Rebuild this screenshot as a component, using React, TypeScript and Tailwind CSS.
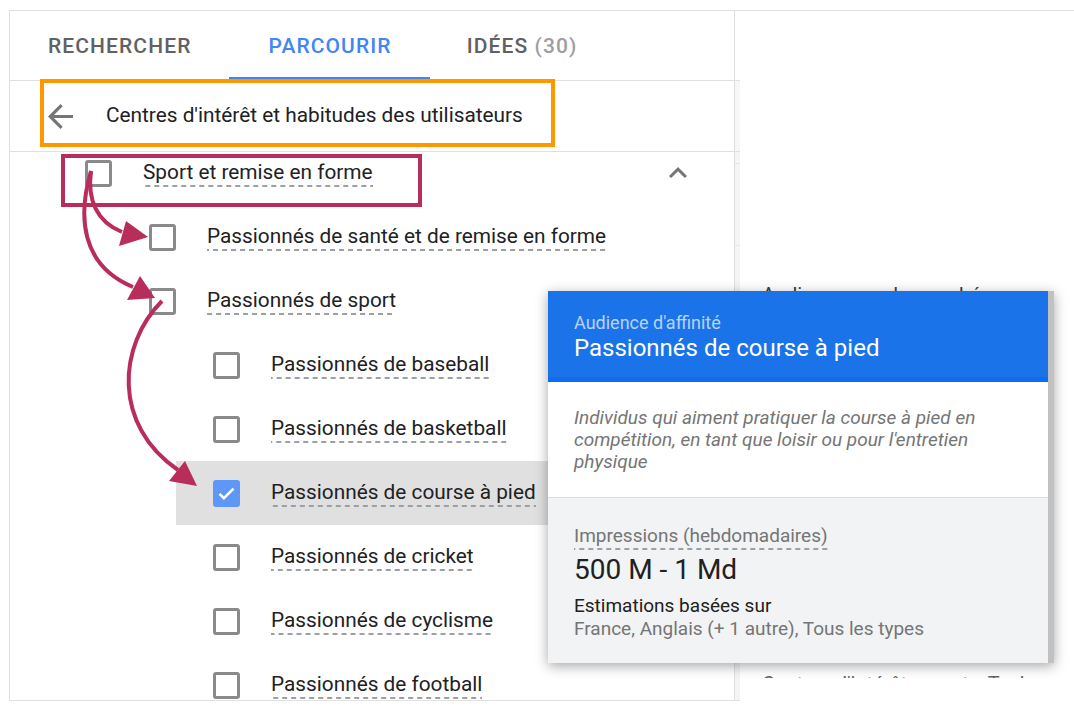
import React from 'react';

type Row = { level: 1 | 2 | 3; label: string; checked?: boolean; chevron?: boolean };

const rows: Row[] = [
  { level: 1, label: 'Sport et remise en forme', chevron: true },
  { level: 2, label: 'Passionnés de santé et de remise en forme' },
  { level: 2, label: 'Passionnés de sport' },
  { level: 3, label: 'Passionnés de baseball' },
  { level: 3, label: 'Passionnés de basketball' },
  { level: 3, label: 'Passionnés de course à pied', checked: true },
  { level: 3, label: 'Passionnés de cricket' },
  { level: 3, label: 'Passionnés de cyclisme' },
  { level: 3, label: 'Passionnés de football' },
];

const levelMargin: Record<number, string> = {
  1: 'ml-[38px]',
  2: 'ml-[102px]',
  3: 'ml-[166px]',
};

const dashed =
  'bg-[linear-gradient(to_right,#9aa0a6_58%,transparent_58%)] bg-[length:9px_2px] bg-repeat-x bg-bottom';

function Checkbox({ checked }: { checked?: boolean }) {
  if (checked) {
    return (
      <div className="w-[27px] h-[27px] rounded-[3px] bg-[#5e97f6] shrink-0 flex items-center justify-center">
        <svg width="27" height="27" viewBox="0 0 27 27">
          <path d="M6.5 13.8l4.4 4.4 9.6-9.6" fill="none" stroke="#ffffff" strokeWidth="2.6" />
        </svg>
      </div>
    );
  }
  return <div className="w-[27px] h-[27px] rounded-[3px] border-[3px] border-[#8a8a8a] shrink-0" />;
}

function LeftPanel() {
  return (
    <div className="w-[726px] h-full shrink-0 border border-[#e0e0e0] flex flex-col bg-white">
      {/* Tabs */}
      <div className="h-[70px] border-b border-[#e0e0e0] flex shrink-0">
        <div className="relative h-full flex items-center pt-[2px] px-[38px] text-[21px] font-medium tracking-[1.1px] text-[#616161]">
          RECHERCHER
        </div>
        <div className="relative h-full flex items-center pt-[2px] pl-[39px] pr-[38px] text-[21px] font-medium tracking-[1.1px] text-[#4285f4]">
          PARCOURIR
          <div className="absolute left-0 right-0 bottom-0 h-[3px] bg-[#4285f4]" />
        </div>
        <div className="relative h-full flex items-center pt-[2px] pl-[37px] pr-[38px] text-[21px] font-medium tracking-[1.1px] text-[#616161]">
          IDÉES&nbsp;<span className="text-[#9e9e9e]">(30)</span>
        </div>
      </div>
      {/* Header */}
      <div className="h-[71px] border-b border-[#e0e0e0] flex items-center shrink-0">
        <svg className="ml-[38px] shrink-0" width="25" height="25" viewBox="4 4 16 16">
          <path d="M20 11H7.83l5.59-5.59L12 4l-8 8 8 8 1.41-1.41L7.83 13H20v-2z" fill="#757575" />
        </svg>
        <div className="ml-[33px] text-[20.8px] text-[#202124]">Centres d'intérêt et habitudes des utilisateurs</div>
      </div>
      {/* List */}
      <div className="flex-1 overflow-hidden">
        <div className="-mt-[11px]">
          {rows.map((r) => (
            <div
              key={r.label}
              className={`flex items-center h-16 pl-[37px] ${levelMargin[r.level]} ${r.checked ? 'bg-[#e0e0e0]' : ''}`}
            >
              <Checkbox checked={r.checked} />
              <span className={`ml-[31px] inline-block text-[20.8px] leading-[24px] pb-[3px] text-[#202124] ${dashed}`}>
                {r.label}
              </span>
              {r.chevron && (
                <svg className="ml-auto mr-[38px]" width="36" height="36" viewBox="0 0 24 24">
                  <path d="M12 8l-6 6 1.41 1.41L12 10.83l4.59 4.58L18 14z" fill="#757575" />
                </svg>
              )}
            </div>
          ))}
        </div>
      </div>
    </div>
  );
}

function RightPanel() {
  return (
    <div className="flex-1 h-full flex border-t border-[#e0e0e0] bg-white">
      <div className="w-[5px] flex flex-col">
        <div className="h-[69px]" />
        <div className="h-px bg-[#e0e0e0]" />
        <div className="h-[70px] bg-[#f7f7f7]" />
        <div className="h-px bg-[#e0e0e0]" />
        <div className="h-[11px] bg-[#f4f4f4]" />
        <div className="h-px bg-[#e6e6e6]" />
        <div className="h-[81px] bg-[#f4f4f4]" />
        <div className="h-px bg-[#e6e6e6]" />
        <div className="flex-1 bg-[#f4f4f4] border-b border-[#e0e0e0]" />
      </div>
      <div className="flex-1 flex flex-col pl-[22px] pt-[272px]">
        <div className="text-[20px] leading-[24px] text-[#3c4043] whitespace-nowrap">Audiences sur le marché</div>
        <div className="mt-[365px] h-[6px] overflow-hidden">
          <div className="text-[20px] leading-[24px] text-[#5f6368] whitespace-nowrap">Centres d'intérêt : sports, Techno</div>
        </div>
      </div>
    </div>
  );
}

function Popup() {
  return (
    <div className="absolute left-[548px] top-[291px] w-[506px] h-[372px] flex bg-white shadow-[0_3px_12px_rgba(0,0,0,0.35)]">
      <div className="flex-1 flex flex-col">
        <div className="h-[91px] bg-[#1a73e8] border-b-[5px] border-[#0f6cf0] pl-[26px] pt-[21px] shrink-0">
          <div className="text-[18px] leading-[22px] text-white/70">Audience d'affinité</div>
          <div className="text-[24px] leading-[28px] text-white">Passionnés de course à pied</div>
        </div>
        <div className="px-[26px] pt-[25px] pb-[24px] border-b border-[#dadce0] italic text-[19px] leading-[22px] text-[#757575] shrink-0">
          Individus qui aiment pratiquer la course à pied en compétition, en tant que loisir ou pour l'entretien
          physique
        </div>
        <div className="flex-1 bg-[#f1f3f4] px-[26px] pt-[26px]">
          <div>
            <span className={`inline-block text-[19px] leading-[24px] pb-[2px] text-[#757575] ${dashed}`}>
              Impressions (hebdomadaires)
            </span>
          </div>
          <div className="mt-[3px] text-[28px] leading-[34px] text-[#212121]">500 M - 1 Md</div>
          <div className="mt-[7px] text-[19px] leading-[23px] text-[#212121]">Estimations basées sur</div>
          <div className="text-[19px] leading-[23px] text-[#757575]">France, Anglais (+ 1 autre), Tous les types</div>
        </div>
      </div>
      <div className="w-[6px] bg-[#c1c1c1]" />
    </div>
  );
}

function Annotations() {
  const m = '#b92d5a';
  return (
    <svg className="absolute left-0 top-0 pointer-events-none" width="1074" height="720" viewBox="0 0 1074 720">
      <rect x="42" y="81" width="511" height="64" fill="none" stroke="#ff9800" strokeWidth="4" />
      <rect x="63" y="156" width="357" height="49" fill="none" stroke={m} strokeWidth="4" />
      <path d="M91 171 C87 200 97 222 122 232" fill="none" stroke={m} strokeWidth="4" />
      <polygon points="148,237 119,246 126,221" fill={m} />
      <path d="M91 171 C78 215 80 265 133 287" fill="none" stroke={m} strokeWidth="4" />
      <polygon points="155,298 127,300 140,276" fill={m} />
      <path d="M162 301 C118 345 112 425 178 470" fill="none" stroke={m} strokeWidth="4" />
      <polygon points="197,486 169,481 185,461" fill={m} />
    </svg>
  );
}

export default function App() {
  return (
    <div className="relative w-[1074px] h-[720px] overflow-hidden bg-white font-[Roboto,sans-serif] pt-[10px] pl-[9px]">
      <div className="flex h-[691px]">
        <LeftPanel />
        <RightPanel />
      </div>
      <Popup />
      <Annotations />
    </div>
  );
}
